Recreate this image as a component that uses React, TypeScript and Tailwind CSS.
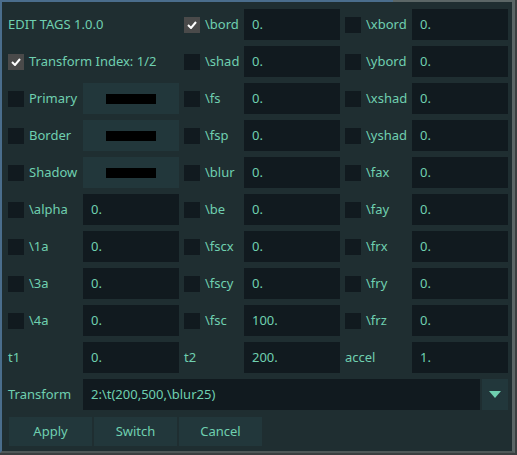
import React from "react";

const txt = "text-[#6fd0b0]";

const Check = ({ on }: { on?: boolean }) => (
  <div
    className={`w-4 h-4 flex items-center justify-center ${on ? "bg-[#4a4a4a]" : "bg-[#111a1f]"}`}
  >
    {on && (
      <svg width="10" height="8" viewBox="0 0 10 8">
        <path d="M1 4 L4 7 L9 1" stroke="#ffffff" strokeWidth="2" fill="none" />
      </svg>
    )}
  </div>
);

const Field = ({ value }: { value: string }) => (
  <div className={`h-[31px] w-[96px] bg-[#111a1f] flex items-center pl-2 ${txt}`}>{value}</div>
);

const ColorBox = () => (
  <div className="h-[31px] w-[96px] bg-[#22373b] flex items-center justify-center">
    <div className="w-[50px] h-[10px] bg-black" />
  </div>
);

const Tag = ({ on, label, value }: { on?: boolean; label: string; value: string }) => (
  <>
    <Check on={on} />
    <span className={txt}>{label}</span>
    <Field value={value} />
  </>
);

const colorRows = ["Primary", "Border", "Shadow"];
const leftRows = ["\\alpha", "\\1a", "\\3a", "\\4a"];
const midTags: [string, string, boolean?][] = [
  ["\\bord", "0.", true],
  ["\\shad", "0."],
  ["\\fs", "0."],
  ["\\fsp", "0."],
  ["\\blur", "0."],
  ["\\be", "0."],
  ["\\fscx", "0."],
  ["\\fscy", "0."],
  ["\\fsc", "100."],
];
const rightTags = ["\\xbord", "\\ybord", "\\xshad", "\\yshad", "\\fax", "\\fay", "\\frx", "\\fry", "\\frz"];

export default function App() {
  return (
    <div
      className="w-[517px] h-[455px] bg-[#3a3f40] text-[13px]"
      style={{ fontFamily: "'Noto Sans', sans-serif" }}
    >
      {/* window frame: focus highlight runs part way along the top */}
      <div className="flex h-[2px] w-[515px]">
        <div className="w-[393px] bg-[#4a6d8c]" />
        <div className="flex-1 bg-[#5b6666]" />
      </div>
      <div className="w-[515px] h-[451px] border-l-2 border-[#4a6d8c] border-r-[3px] border-b-[2px] border-r-[#5b6666] border-b-[#4f5858] bg-[#1f2e31] flex flex-col">
        <div className="grid grid-cols-[16px_49px_96px_16px_34px_96px_16px_41px_96px] gap-x-[5px] gap-y-[6px] items-center pl-[6px] pt-[7px] auto-rows-[31px]">
          {Array.from({ length: 9 }).map((_, i) => {
            let left: React.ReactNode;
            if (i === 0) {
              left = <span className={`col-span-3 ${txt}`}>EDIT TAGS 1.0.0</span>;
            } else if (i === 1) {
              left = (
                <>
                  <Check on />
                  <span className={`col-span-2 ${txt}`}>Transform Index: 1/2</span>
                </>
              );
            } else if (i < 5) {
              left = (
                <>
                  <Check />
                  <span className={txt}>{colorRows[i - 2]}</span>
                  <ColorBox />
                </>
              );
            } else {
              left = <Tag label={leftRows[i - 5]} value="0." />;
            }
            const m = midTags[i];
            return (
              <React.Fragment key={i}>
                {left}
                <Tag on={m[2]} label={m[0]} value={m[1]} />
                <Tag label={rightTags[i]} value="0." />
              </React.Fragment>
            );
          })}
          <span className={`col-span-2 ${txt}`}>t1</span>
          <Field value="0." />
          <span className={`col-span-2 ${txt}`}>t2</span>
          <Field value="200." />
          <span className={`col-span-2 ${txt}`}>accel</span>
          <Field value="1." />
          <span className={`col-span-2 ${txt}`}>Transform</span>
          <div className="col-span-7 flex h-[31px] gap-[2px]">
            <div className={`flex-1 bg-[#111a1f] flex items-center pl-2 ${txt}`}>
              2:\t(200,500,\blur25)
            </div>
            <div className="w-[26px] bg-[#22373b] flex items-center justify-center">
              <svg width="12" height="7" viewBox="0 0 12 7">
                <path d="M0 0 H12 L6 7 Z" fill="#6fd0b0" />
              </svg>
            </div>
          </div>
        </div>
        <div className="flex pl-[7px] pt-[7px] gap-[2px]">
          {["Apply", "Switch", "Cancel"].map((b) => (
            <div key={b} className={`w-[83px] h-[29px] bg-[#22373b] flex items-center justify-center ${txt}`}>
              {b}
            </div>
          ))}
        </div>
      </div>
    </div>
  );
}
